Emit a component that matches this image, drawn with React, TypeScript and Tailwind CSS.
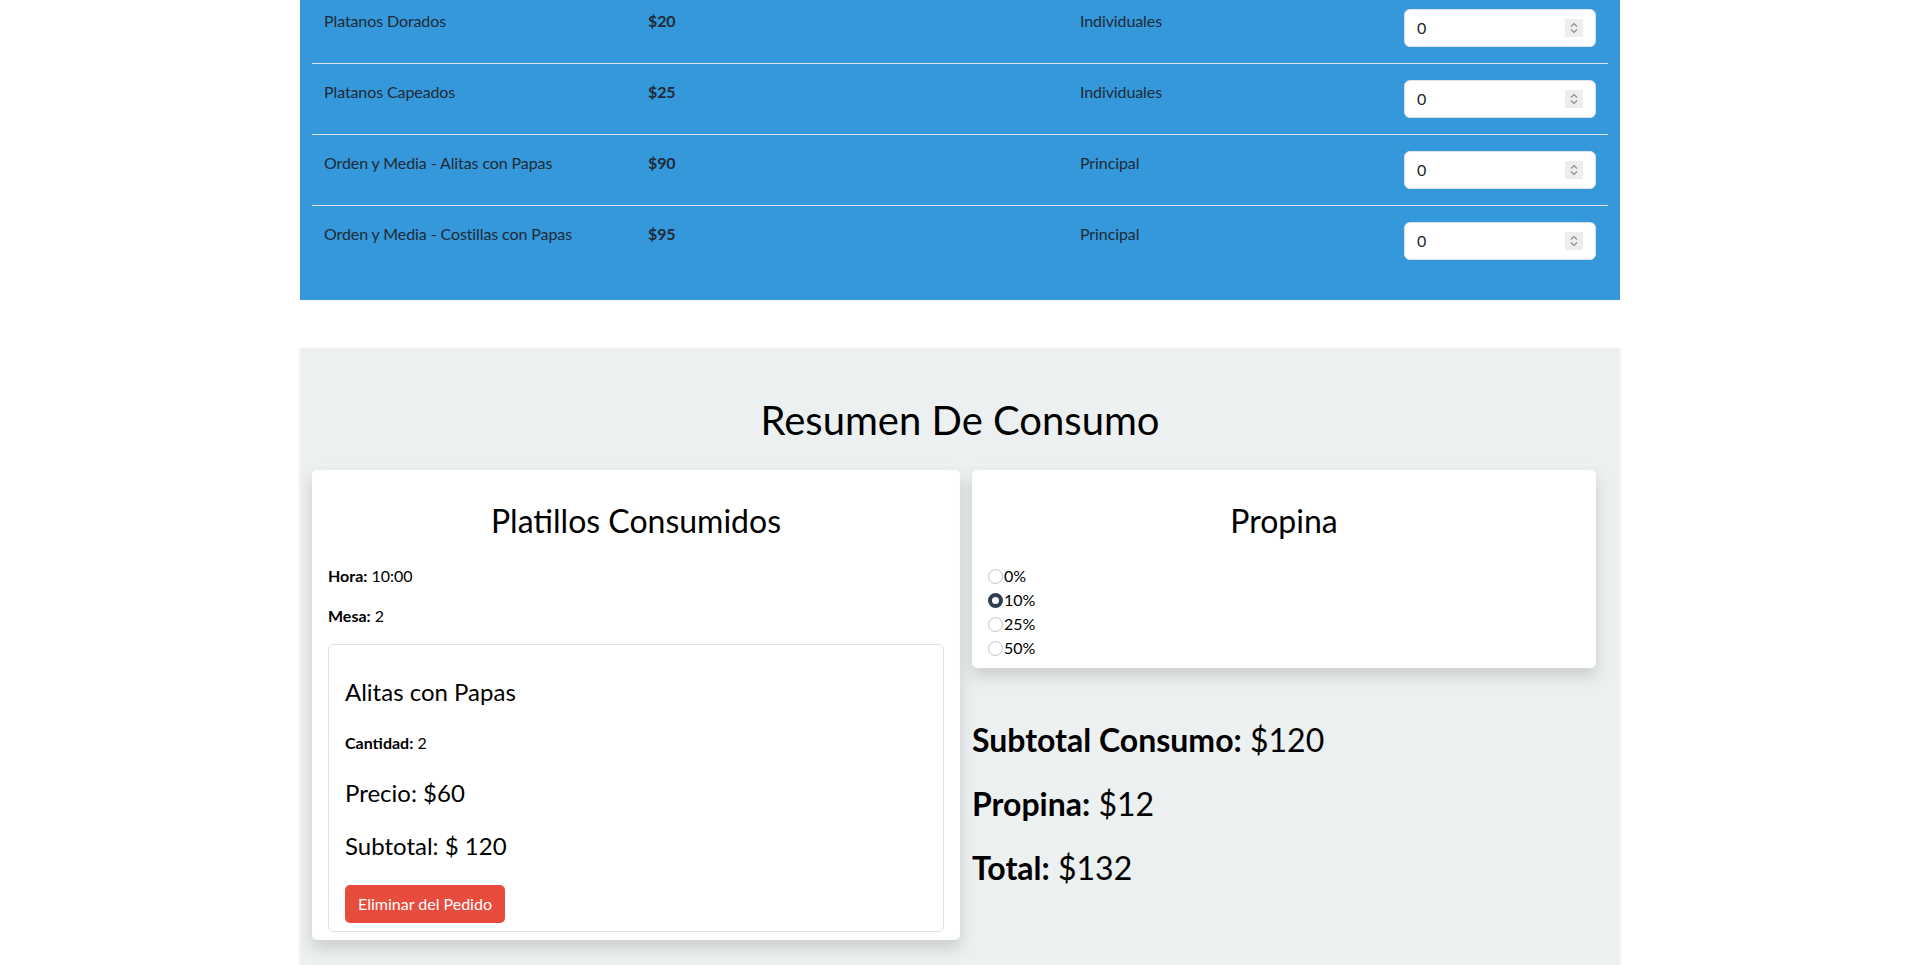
import React, { useState } from 'react';

const platillos = [
  { id: 1, nombre: 'Platanos Dorados', precio: 20, categoria: 'Individuales' },
  { id: 2, nombre: 'Platanos Capeados', precio: 25, categoria: 'Individuales' },
  { id: 3, nombre: 'Orden y Media - Alitas con Papas', precio: 90, categoria: 'Principal' },
  { id: 4, nombre: 'Orden y Media - Costillas con Papas', precio: 95, categoria: 'Principal' },
];

const propinas = ['0', '10', '25', '50'];

const Spinner = () => (
  <svg width="18" height="18" viewBox="0 0 18 18" className="shrink-0">
    <rect width="18" height="18" fill="#ededed" />
    <path d="M6 7.5 L9 4.5 L12 7.5" fill="none" stroke="#8a8a8a" strokeWidth="1.1" />
    <path d="M6 10.5 L9 13.5 L12 10.5" fill="none" stroke="#8a8a8a" strokeWidth="1.1" />
  </svg>
);

const App = () => {
  const [propina, setPropina] = useState('10');

  // pedido fijo por ahora
  const pedido = [{ id: 9, nombre: 'Alitas con Papas', cantidad: 2, precio: 60 }];
  const subtotal = pedido.reduce((t, p) => t + p.cantidad * p.precio, 0);
  const montoPropina = Math.round((subtotal * Number(propina)) / 100);

  return (
    <div className="min-h-screen bg-white font-['Lato',sans-serif] text-[#1f2a36]">
      <div className="mx-auto w-[1320px]">
        {/* menu */}
        <div className="overflow-hidden bg-[#3498db] px-3 pb-6">
          <div className="-mt-[7px]">
            {platillos.map((p, i) => (
              <div
                key={p.id}
                className={`grid grid-cols-[324px_432px_324px_216px] py-4 text-base leading-6 tracking-[-0.1px] ${
                  i < platillos.length - 1 ? 'border-b border-[#dee2e6]' : ''
                }`}
              >
                <p className="px-3">{p.nombre}</p>
                <p className="px-3 font-bold">${p.precio}</p>
                <p className="px-3">{p.categoria}</p>
                <div className="px-3">
                  <div className="flex h-[38px] items-center rounded-[6px] border border-[#dee2e6] bg-white pr-3 pl-3">
                    <input
                      type="number"
                      defaultValue={0}
                      min={0}
                      className="min-w-0 flex-1 bg-transparent text-base text-[#212529] outline-none [appearance:textfield] [&::-webkit-inner-spin-button]:appearance-none [&::-webkit-outer-spin-button]:appearance-none"
                    />
                    <Spinner />
                  </div>
                </div>
              </div>
            ))}
          </div>
        </div>

        {/* resumen */}
        <div className="mt-12 bg-[#ecf0f1] px-3 pt-12 pb-12 text-black shadow-sm">
          <h1 className="mb-[26px] text-center text-[40px] leading-[1.2] font-normal">Resumen De Consumo</h1>
          <div className="grid grid-cols-2 items-start">
            <div className="rounded-[5px] bg-white px-4 pt-8 pb-2 shadow-[0_8px_16px_rgba(0,0,0,0.15)]">
              <h2 className="mb-6 text-center text-[32px] leading-[1.2] font-normal">Platillos Consumidos</h2>
              <p className="mb-4 text-base leading-6">
                <span className="font-bold">Hora:</span> 10:00
              </p>
              <p className="mb-4 text-base leading-6">
                <span className="font-bold">Mesa:</span> 2
              </p>
              {pedido.map((p) => (
                <div key={p.id} className="rounded-[5px] border border-[#dee2e6] px-4 pt-[33px] pb-2">
                  <h4 className="mb-6 text-2xl leading-[1.2] font-normal">{p.nombre}</h4>
                  <p className="mb-6 text-base leading-6">
                    <span className="font-bold">Cantidad:</span> {p.cantidad}
                  </p>
                  <p className="mb-6 text-2xl leading-[1.2]">Precio: ${p.precio}</p>
                  <p className="mb-6 text-2xl leading-[1.2]">Subtotal: $ {p.cantidad * p.precio}</p>
                  <button className="h-[38px] rounded-[5px] bg-[#e74c3c] px-[13px] text-base text-white">
                    Eliminar del Pedido
                  </button>
                </div>
              ))}
            </div>

            <div className="px-3">
              <div className="rounded-[5px] bg-white px-4 pt-8 pb-2 shadow-[0_8px_16px_rgba(0,0,0,0.15)]">
                <h2 className="mb-6 text-center text-[32px] leading-[1.2] font-normal">Propina</h2>
                {propinas.map((v) => (
                  <label key={v} className="flex h-6 items-center text-base leading-6">
                    <input
                      type="radio"
                      name="propina"
                      value={v}
                      checked={propina === v}
                      onChange={() => setPropina(v)}
                      className="m-0 mr-[1px] h-[15px] w-[15px] appearance-none rounded-full border border-[#c4c4c4] bg-white checked:border-[4px] checked:border-[#2c3e50]"
                    />
                    {v}%
                  </label>
                ))}
              </div>

              <div className="mt-12">
                <p className="mb-4 text-[32px] leading-[1.5]">
                  <span className="font-bold">Subtotal Consumo:</span> ${subtotal}
                </p>
                <p className="mb-4 text-[32px] leading-[1.5]">
                  <span className="font-bold">Propina:</span> ${montoPropina}
                </p>
                <p className="mb-4 text-[32px] leading-[1.5]">
                  <span className="font-bold">Total:</span> ${subtotal + montoPropina}
                </p>
              </div>
            </div>
          </div>
        </div>
      </div>
    </div>
  );
};

export default App;
